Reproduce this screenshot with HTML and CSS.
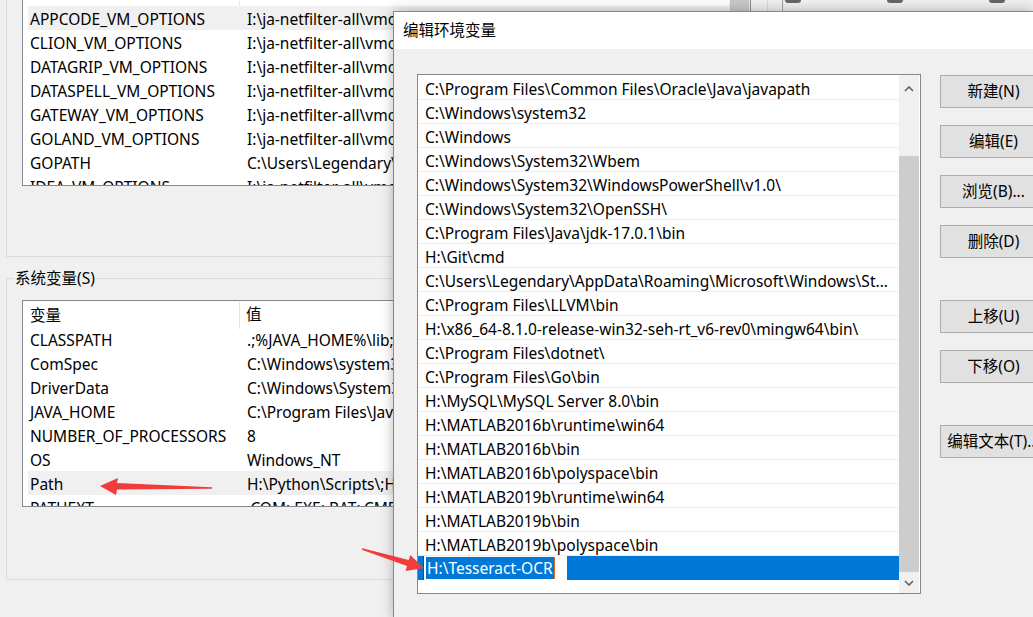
FILE: index.html
```html
<!DOCTYPE html>
<html lang="zh-CN">
<head>
<meta charset="utf-8">
<title>编辑环境变量</title>
<link rel="stylesheet" href="styles.css">
</head>
<body>
<div class="envwin">
  <div class="left-col">
    <div class="group upper">
      <div class="list upper-list">
        <div class="list-body">
          <div class="header stub"><span class="hcol"></span><span></span></div>
          <div class="row hover"><span>APPCODE_VM_OPTIONS</span><span>I:\ja-netfilter-all\vmoptions\appcode.vmoptions</span></div>
          <div class="row"><span>CLION_VM_OPTIONS</span><span>I:\ja-netfilter-all\vmoptions\clion.vmoptions</span></div>
          <div class="row"><span>DATAGRIP_VM_OPTIONS</span><span>I:\ja-netfilter-all\vmoptions\datagrip.vmoptions</span></div>
          <div class="row"><span>DATASPELL_VM_OPTIONS</span><span>I:\ja-netfilter-all\vmoptions\dataspell.vmoptions</span></div>
          <div class="row"><span>GATEWAY_VM_OPTIONS</span><span>I:\ja-netfilter-all\vmoptions\gateway.vmoptions</span></div>
          <div class="row"><span>GOLAND_VM_OPTIONS</span><span>I:\ja-netfilter-all\vmoptions\goland.vmoptions</span></div>
          <div class="row"><span>GOPATH</span><span>C:\Users\Legendary\go</span></div>
          <div class="row"><span>IDEA_VM_OPTIONS</span><span>I:\ja-netfilter-all\vmoptions\idea.vmoptions</span></div>
        </div>
        <div class="vscroll"><div class="vthumb"></div></div>
      </div>
    </div>
    <div class="group lower">
      <div class="group-title">系统变量(S)</div>
      <div class="list lower-list">
        <div class="list-body">
          <div class="header"><span class="hcol">变量</span><span class="hval">值</span></div>
          <div class="row"><span>CLASSPATH</span><span>.;%JAVA_HOME%\lib;%JAVA_HOME%\lib\tools.jar</span></div>
          <div class="row"><span>ComSpec</span><span>C:\Windows\system32\cmd.exe</span></div>
          <div class="row"><span>DriverData</span><span>C:\Windows\System32\Drivers\DriverData</span></div>
          <div class="row"><span>JAVA_HOME</span><span>C:\Program Files\Java\jdk-17.0.1</span></div>
          <div class="row"><span>NUMBER_OF_PROCESSORS</span><span>8</span></div>
          <div class="row"><span>OS</span><span>Windows_NT</span></div>
          <div class="row hover"><span>Path</span><span>H:\Python\Scripts\;H:\Python\;C:\Program Files</span></div>
          <div class="row"><span>PATHEXT</span><span>.COM;.EXE;.BAT;.CMD;.VBS;.VBE;.JS;.JSE</span></div>
        </div>
      </div>
    </div>
  </div>
  <div class="right-col">
    <span class="mark"></span><span class="mark"></span><span class="mark"></span>
  </div>
</div>

<div class="dialog">
  <div class="titlebar">编辑环境变量</div>
  <div class="dlg-body">
    <div class="path-list">
      <div class="items">
        <div class="item">C:\Program Files\Common Files\Oracle\Java\javapath</div>
        <div class="item">C:\Windows\system32</div>
        <div class="item">C:\Windows</div>
        <div class="item">C:\Windows\System32\Wbem</div>
        <div class="item">C:\Windows\System32\WindowsPowerShell\v1.0\</div>
        <div class="item">C:\Windows\System32\OpenSSH\</div>
        <div class="item">C:\Program Files\Java\jdk-17.0.1\bin</div>
        <div class="item">H:\Git\cmd</div>
        <div class="item">C:\Users\Legendary\AppData\Roaming\Microsoft\Windows\St...</div>
        <div class="item">C:\Program Files\LLVM\bin</div>
        <div class="item">H:\x86_64-8.1.0-release-win32-seh-rt_v6-rev0\mingw64\bin\</div>
        <div class="item">C:\Program Files\dotnet\</div>
        <div class="item">C:\Program Files\Go\bin</div>
        <div class="item">H:\MySQL\MySQL Server 8.0\bin</div>
        <div class="item">H:\MATLAB2016b\runtime\win64</div>
        <div class="item">H:\MATLAB2016b\bin</div>
        <div class="item">H:\MATLAB2016b\polyspace\bin</div>
        <div class="item">H:\MATLAB2019b\runtime\win64</div>
        <div class="item">H:\MATLAB2019b\bin</div>
        <div class="item">H:\MATLAB2019b\polyspace\bin</div>
        <div class="item selected"><span class="edit"><span class="sel-text">H:\Tesseract-OCR</span></span></div>
      </div>
      <div class="scrollbar">
        <div class="sb-up"><svg width="10" height="6" viewBox="0 0 10 6"><polyline points="1,5 5,1 9,5" fill="none" stroke="#606060" stroke-width="1.6"/></svg></div>
        <div class="sb-gap"></div>
        <div class="sb-thumb"></div>
        <div class="sb-down"><svg width="10" height="6" viewBox="0 0 10 6"><polyline points="1,1 5,5 9,1" fill="none" stroke="#606060" stroke-width="1.6"/></svg></div>
      </div>
    </div>
    <div class="buttons">
      <div class="btn">新建(N)</div>
      <div class="btn">编辑(E)</div>
      <div class="btn">浏览(B)...</div>
      <div class="btn">删除(D)</div>
      <div class="btn spaced">上移(U)</div>
      <div class="btn">下移(O)</div>
      <div class="btn spaced">编辑文本(T)...</div>
    </div>
  </div>
</div>

<svg class="annot" width="1033" height="617" viewBox="0 0 1033 617">
  <polygon fill="#f23b3b" points="100,486 118,478 117,483 212,487.3 212,488.8 117,489.5 116,495"/>
  <polygon fill="#f23b3b" points="424,568 405.5,571 407,566 361.8,549.8 362.3,548.3 408.8,560 410.2,555"/>
</svg>
</body>
</html>
```

FILE: styles.css
```css
html, body {
  margin: 0;
  padding: 0;
}
body {
  width: 1033px;
  height: 617px;
  overflow: hidden;
  position: relative;
  background: #f0f0f0;
  font-family: "Noto Sans", "Noto Sans CJK SC", sans-serif;
  font-size: 15.5px;
  color: #000;
}

/* background window */
.envwin {
  display: flex;
  height: 617px;
  overflow: hidden;
}
.left-col {
  width: 782px;
  flex: none;
}
.group {
  width: 745px;
  padding-left: 15px;
  border: 1px solid #dcdcdc;
}
.group.upper {
  height: 256px;
  margin-left: 6px;
  border-top: none;
}
.group.lower {
  height: 300px;
  margin: 21px 0 0 6px;
}
.group-title {
  width: fit-content;
  margin: -11px 0 0 -8px;
  padding: 0 1px;
  line-height: 20px;
  background: #f0f0f0;
}
.list {
  width: 727px;
  display: flex;
  background: #fff;
  border: 1px solid #828790;
  overflow: hidden;
}
.upper-list {
  height: 185px;
  border-top: none;
}
.lower-list {
  height: 205px;
  margin-top: 12px;
}
.list-body {
  flex: 1;
  min-width: 0;
}
.vscroll {
  width: 21px;
  background: #f0f0f0;
}
.vthumb {
  height: 60px;
  margin: 0 1px;
  background: #c8c8c8;
}
.header {
  display: grid;
  grid-template-columns: 217px 1fr;
  height: 26px;
  line-height: 27px;
}
.header.stub {
  height: 6px;
}
.header .hcol {
  border-right: 1px solid #e5e5e5;
  padding-left: 7px;
  margin: 1px 0;
}
.header .hval {
  padding-left: 6px;
}
.row {
  display: grid;
  grid-template-columns: 212px 1fr;
  margin-left: 5px;
  height: 24px;
  box-sizing: border-box;
  padding-top: 2px;
  line-height: 22px;
  white-space: nowrap;
  overflow: hidden;
}
.row span:first-child {
  padding-left: 2px;
}
.row span:last-child {
  padding-left: 7px;
}
.row.hover {
  background: #f0f0f0;
}

.right-col {
  flex: 1;
  display: flex;
  gap: 86px;
  align-items: flex-start;
  padding-left: 2px;
  border-left: 1px solid #a0a0a0;
}
.mark {
  width: 16px;
  height: 3px;
  background: #666;
  border-radius: 0 0 3px 3px;
}

/* dialog */
.dialog {
  position: absolute;
  left: 393px;
  top: 11px;
  width: 640px;
  height: 606px;
  overflow: hidden;
  background: #f0f0f0;
  border: 1px solid #888;
  border-right: none;
  border-bottom: none;
  box-shadow: 0 0 12px rgba(0, 0, 0, 0.28);
}
.titlebar {
  height: 37px;
  line-height: 37px;
  padding-left: 9px;
  background: #fff;
}
.dlg-body {
  display: flex;
  align-items: flex-start;
  padding: 25px 0 0 23px;
}
.path-list {
  flex: none;
  width: 502px;
  height: 518px;
  display: flex;
  background: #fff;
  border: 1px solid #828790;
}
.items {
  width: 481px;
  padding-top: 1px;
}
.item {
  height: 24px;
  box-sizing: border-box;
  padding: 2px 0 0 7px;
  line-height: 22px;
  border-bottom: 1px solid #ececec;
  white-space: nowrap;
  overflow: hidden;
}
.item.selected {
  background: #0078d7;
  border-bottom: none;
  padding: 0 0 0 5px;
  display: flex;
  align-items: stretch;
}
.edit {
  display: flex;
  align-items: stretch;
  width: 144px;
  box-sizing: border-box;
  padding: 1px 2px;
  background: #fff;
  border-left: 1px solid #404040;
}
.sel-text {
  background: #0078d7;
  color: #fff;
  line-height: 22px;
  padding: 0 1px;
  border-right: 1px solid #e07020;
}
.scrollbar {
  width: 20px;
  margin-right: 1px;
  display: flex;
  flex-direction: column;
  background: #f0f0f0;
}
.sb-up {
  height: 17px;
  display: flex;
  justify-content: center;
  align-items: flex-end;
}
.sb-gap {
  height: 64px;
}
.sb-thumb {
  flex: 1;
  background: #cdcdcd;
}
.sb-down {
  height: 21px;
  display: flex;
  justify-content: center;
  align-items: center;
}
.buttons {
  flex: none;
  display: flex;
  flex-direction: column;
  gap: 17px;
  margin: 1px 0 0 19px;
}
.btn {
  width: 107px;
  height: 33px;
  box-sizing: border-box;
  line-height: 31px;
  text-align: center;
  white-space: nowrap;
  background: #e1e1e1;
  border: 1px solid #adadad;
}
.btn.spaced {
  margin-top: 25px;
}

.annot {
  position: absolute;
  left: 0;
  top: 0;
  pointer-events: none;
}
```
